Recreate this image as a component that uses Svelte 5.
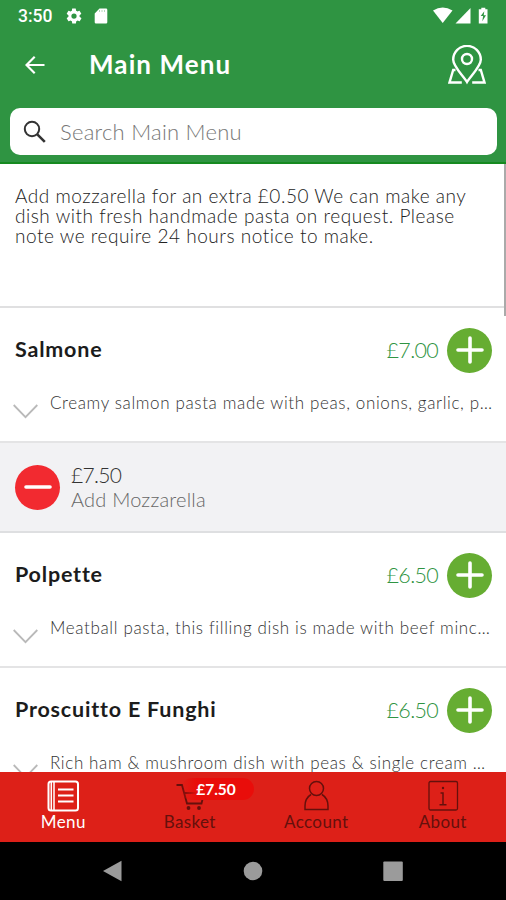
<script lang="ts">
  const dishes = [
    {
      name: 'Salmone',
      price: '£7.00',
      description: 'Creamy salmon pasta made with peas, onions, garlic, p…',
      extra: { price: '£7.50', name: 'Add Mozzarella' }
    },
    {
      name: 'Polpette',
      price: '£6.50',
      description: 'Meatball pasta, this filling dish is made with beef minc…'
    },
    {
      name: 'Proscuitto E Funghi',
      price: '£6.50',
      description: 'Rich ham & mushroom dish with peas & single cream …'
    }
  ];

  const tabs = [
    { id: 'menu', label: 'Menu' },
    { id: 'basket', label: 'Basket', badge: '£7.50' },
    { id: 'account', label: 'Account' },
    { id: 'about', label: 'About' }
  ];

  let active = $state('menu');
</script>

<div class="screen">
  <header>
    <div class="status">
      <span class="time">3:50</span>
      <svg class="gear" width="18" height="18" viewBox="0 0 24 24" fill="#fff">
        <path fill-rule="evenodd" d="M19.4 13a7.500 7.500 0 0 0 0-2l2.100-1.700a.5.5 0 0 0 .1-.6l-2-3.500a.5.5 0 0 0-.6-.2l-2.500 1a7.300 7.300 0 0 0-1.700-1l-.4-2.600a.5.5 0 0 0-.5-.4h-4a.5.5 0 0 0-.5.4L9.200 5a7.300 7.300 0 0 0-1.700 1L5 5a.5.5 0 0 0-.6.2l-2 3.500a.5.5 0 0 0 .1.600L4.600 11a7.500 7.500 0 0 0 0 2l-2.100 1.700a.5.5 0 0 0-.1.600l2 3.500c.1.200.4.300.6.200l2.500-1a7.300 7.300 0 0 0 1.700 1l.4 2.600c0 .2.200.4.500.4h4c.3 0 .5-.2.500-.4l.4-2.600a7.300 7.300 0 0 0 1.700-1l2.500 1c.2.100.5 0 .6-.2l2-3.500a.5.500 0 0 0-.1-.6zM12 15.500a3.500 3.500 0 1 1 0-7 3.500 3.500 0 0 1 0 7z" />
      </svg>
      <svg class="card" width="14" height="16" viewBox="0 0 14 16">
        <path fill="#fff" d="M5.500.5H12a1.300 1.300 0 0 1 1.300 1.300v12.400a1.300 1.300 0 0 1-1.300 1.300H2a1.300 1.300 0 0 1-1.300-1.300V5.500z" />
        <path stroke="#b5dabb" d="M5.500 2v2M8 2v2M10.500 2v2" />
      </svg>
      <svg class="signals" width="57" height="18" viewBox="0 0 57 18" fill="#fff">
        <path d="M0 3.500Q9.700-2.500 19.500 3.500L9.700 16z" />
        <path d="M37.500 1v15.500h-15z" />
        <path d="M48.300 2.200V.7h4v1.500h2.200v14.300h-8.700V2.200z" />
        <path fill="#2f9442" d="M51.300 4.200 47.700 9h2.400l-.8 5.200L53 8.200h-2.300z" />
      </svg>
    </div>

    <div class="titlebar">
      <button class="plain" aria-label="Back">
        <svg width="20" height="18" viewBox="0 0 20 18" fill="none" stroke="#fff" stroke-width="2.200">
          <path d="M19.500 9H1.500M9.700.8 1.500 9l8.200 8.200" />
        </svg>
      </button>
      <h1>Main Menu</h1>
      <button class="plain map" aria-label="Map">
        <svg width="38" height="40" viewBox="0 0 38 40" fill="none" stroke="#fff" stroke-width="2.400">
          <path d="M19 37C15.500 31 5.200 21.500 5.200 14.700a13.800 13.800 0 0 1 27.600 0C32.800 21.500 22.500 31 19 37z" />
          <circle cx="19" cy="14" r="5" />
          <path d="M7.500 25H5.200L1.500 37.500h12.300M30.500 25h2.300l3.700 12.500H24.200" />
        </svg>
      </button>
    </div>

    <label class="search">
      <svg width="24" height="24" viewBox="0 0 24 24" fill="none" stroke="#333">
        <circle cx="9" cy="9" r="7.200" stroke-width="2" />
        <path stroke-width="2.600" d="m14.300 14.300 7.500 7.500" />
      </svg>
      <input placeholder="Search Main Menu" />
    </label>
  </header>

  <main>
    <p class="intro">
      Add mozzarella for an extra £0.50 We can make any<br />
      dish with fresh handmade pasta on request. Please<br />
      note we require 24 hours notice to make.
    </p>
    <div class="scrollbar"></div>

    {#each dishes as dish}
      <section class="dish">
        <div class="top">
          <h2>{dish.name}</h2>
          <span class="price">{dish.price}</span>
          <button class="round add" aria-label="Add {dish.name}">
            <svg width="28" height="28" viewBox="0 0 28 28" stroke="#fff" stroke-width="3.600" stroke-linecap="round">
              <path d="M14 2v24M2 14h24" />
            </svg>
          </button>
        </div>
        <div class="details">
          <svg width="25" height="15" viewBox="0 0 25 15" fill="none" stroke="#b9b9b9" stroke-width="1.800">
            <path d="m.7 1 11.800 12.200L24.300 1" />
          </svg>
          <p>{dish.description}</p>
        </div>
      </section>
      {#if dish.extra}
        <section class="extra">
          <button class="round remove" aria-label="Remove {dish.extra.name}">
            <svg width="28" height="28" viewBox="0 0 28 28" stroke="#fff" stroke-width="3.600" stroke-linecap="round">
              <path d="M2 14h24" />
            </svg>
          </button>
          <div>
            <p class="extra-price">{dish.extra.price}</p>
            <p class="extra-name">{dish.extra.name}</p>
          </div>
        </section>
      {/if}
    {/each}
  </main>

  <nav class="tabs">
    {#each tabs as tab}
      <button class="tab {tab.id}" class:active={active === tab.id} onclick={() => (active = tab.id)}>
        <svg width="34" height="32" viewBox="0 0 34 32" fill="none" stroke="currentColor" stroke-width="1.500">
          {#if tab.id === 'menu'}
            <rect x="2.500" y="1.500" width="29.500" height="29" rx="2.500" stroke-width="2" />
            <path d="M5.300 2v28M8 2v28" stroke-width="1.500" />
            <path d="M12 9.500h15.500M12 15.500h15.500M12 21.500h15.500" stroke-width="2" />
          {:else if tab.id === 'basket'}
            <path d="M3.500 5H9l5 18.500h14.500L31 13M11 13h20" stroke-width="1.800" />
            <circle cx="15.500" cy="28" r="1.900" fill="currentColor" stroke="none" />
            <circle cx="26" cy="28" r="1.900" fill="currentColor" stroke="none" />
          {:else if tab.id === 'account'}
            <circle cx="17.500" cy="8.500" r="7" />
            <path d="M12 14.500C8 17 6 21 6 26v3.500h23V26c0-5-2-9-6-11.500" />
          {:else}
            <rect x="3" y="1.500" width="28.500" height="28.500" rx="1.500" stroke-width="1.300" />
            <path d="M14.500 13H17v11.500M13.500 24.800h7" />
            <circle cx="17" cy="8" r="1.200" fill="currentColor" stroke="none" />
          {/if}
        </svg>
        <span>{tab.label}</span>
        {#if tab.badge}
          <b class="badge">{tab.badge}</b>
        {/if}
      </button>
    {/each}
  </nav>

  <footer>
    <svg width="20" height="22" viewBox="0 0 20 22"><path fill="#9b9b9b" d="M0 11 18.500 .8v20.400z" /></svg>
    <svg width="20" height="22" viewBox="0 0 20 22"><circle cx="10" cy="11" r="9.300" fill="#9b9b9b" /></svg>
    <svg width="20" height="22" viewBox="0 0 20 22"><rect x=".3" y="1.500" width="19.500" height="19.500" rx="1" fill="#9b9b9b" /></svg>
  </footer>
</div>

<style>
  :global(body) {
    margin: 0;
  }

  .screen {
    width: 506px;
    height: 900px;
    display: flex;
    flex-direction: column;
    overflow: hidden;
    background: #fff;
    font-family: Lato, 'Liberation Sans', sans-serif;
  }

  h1,
  h2,
  p {
    margin: 0;
  }

  button {
    border: 0;
    padding: 0;
    font-family: inherit;
  }

  svg {
    display: block;
    flex: none;
  }

  header {
    box-sizing: border-box;
    height: 164px;
    flex: none;
    background: #2f9442;
    border-bottom: 2px solid #168a20;
    color: #fff;
  }

  .status {
    height: 32px;
    display: flex;
    align-items: center;
    padding: 0 16px 0 18px;
  }

  .time {
    width: 47px;
    font: 500 17.5px Roboto, sans-serif;
  }

  .card {
    margin-left: 11px;
  }

  .signals {
    margin-left: auto;
    margin-top: -1px;
  }

  .titlebar {
    height: 66px;
    display: flex;
    align-items: center;
    padding: 0 20px 0 25px;
  }

  .plain {
    background: none;
  }

  h1 {
    margin: -2px 0 0 44px;
    font-size: 26px;
    font-weight: 700;
    line-height: 32px;
    letter-spacing: 1.1px;
  }

  .map {
    margin-left: auto;
  }

  .search {
    margin: 10px 9px 0 10px;
    height: 47px;
    display: flex;
    align-items: center;
    padding-left: 13px;
    border-radius: 10px;
    background: #fff;
  }

  input {
    flex: 1;
    min-width: 0;
    margin-left: 13px;
    padding: 0;
    border: 0;
    outline: 0;
    font: 300 22px Lato, sans-serif;
    letter-spacing: 0.25px;
  }

  input::placeholder {
    color: #777;
    opacity: 1;
  }

  main {
    position: relative;
    height: 608px;
    flex: none;
    overflow: hidden;
  }

  .intro {
    box-sizing: border-box;
    height: 144px;
    padding: 22px 15px 0;
    border-bottom: 2px solid #e0e0e1;
    color: #222;
    font-size: 19px;
    font-weight: 300;
    line-height: 20px;
    letter-spacing: 0.53px;
    white-space: nowrap;
  }

  .scrollbar {
    position: absolute;
    top: 0;
    right: 0;
    width: 2px;
    height: 152px;
    background: #aaa;
  }

  .dish {
    box-sizing: border-box;
    height: 135px;
    padding: 20px 14px 0 15px;
    border-bottom: 2px solid #e4e4e5;
  }

  .top {
    display: flex;
    align-items: center;
    height: 44px;
  }

  h2 {
    flex: 1;
    margin-top: -2px;
    color: #1c1c1c;
    font-size: 21.5px;
    font-weight: 700;
    letter-spacing: 0.8px;
  }

  .price {
    margin: -1px 9px 0 0;
    color: #2f9442;
    font-size: 21.5px;
    font-weight: 300;
    letter-spacing: -0.7px;
  }

  .round {
    display: flex;
    align-items: center;
    justify-content: center;
    width: 45px;
    height: 45px;
    flex: none;
    border-radius: 50%;
  }

  .add {
    background: #66ad32;
  }

  .remove {
    background: #f22a30;
  }

  .details {
    display: flex;
    margin: 20px 0 0 -2px;
  }

  .details svg {
    margin-top: 12px;
  }

  .details p {
    margin-left: 12px;
    color: #333;
    font-size: 17px;
    font-weight: 300;
    line-height: 22px;
    letter-spacing: 0.63px;
    white-space: nowrap;
  }

  .extra {
    box-sizing: border-box;
    height: 90px;
    display: flex;
    align-items: center;
    gap: 11px;
    padding-left: 15px;
    background: #f2f2f4;
    border-bottom: 2px solid #dedfe1;
  }

  .extra p {
    color: #333;
    font-size: 21px;
    font-weight: 300;
    line-height: 25px;
  }

  .extra .extra-price {
    letter-spacing: -0.7px;
  }

  .extra .extra-name {
    color: #666;
    font-size: 20px;
    letter-spacing: 0.2px;
  }

  .tabs {
    display: flex;
    flex: none;
    height: 70px;
    background: #dd2018;
  }

  .tab {
    position: relative;
    display: flex;
    flex: 1;
    flex-direction: column;
    align-items: center;
    padding-top: 8px;
    background: none;
    color: #65100c;
    font-size: 17px;
    letter-spacing: 0.4px;
    line-height: 20px;
  }

  .tab.active {
    color: #fff;
  }

  .badge {
    position: absolute;
    top: 6px;
    left: 54px;
    width: 73px;
    border-radius: 11px;
    background: linear-gradient(to right, transparent, #e90d0a 16px);
    color: #fff;
    font-size: 15.5px;
    line-height: 22px;
    letter-spacing: 0;
    text-indent: -2px;
  }

  footer {
    flex: 1;
    display: flex;
    align-items: center;
    justify-content: center;
    gap: 120px;
    background: #000;
  }
</style>
